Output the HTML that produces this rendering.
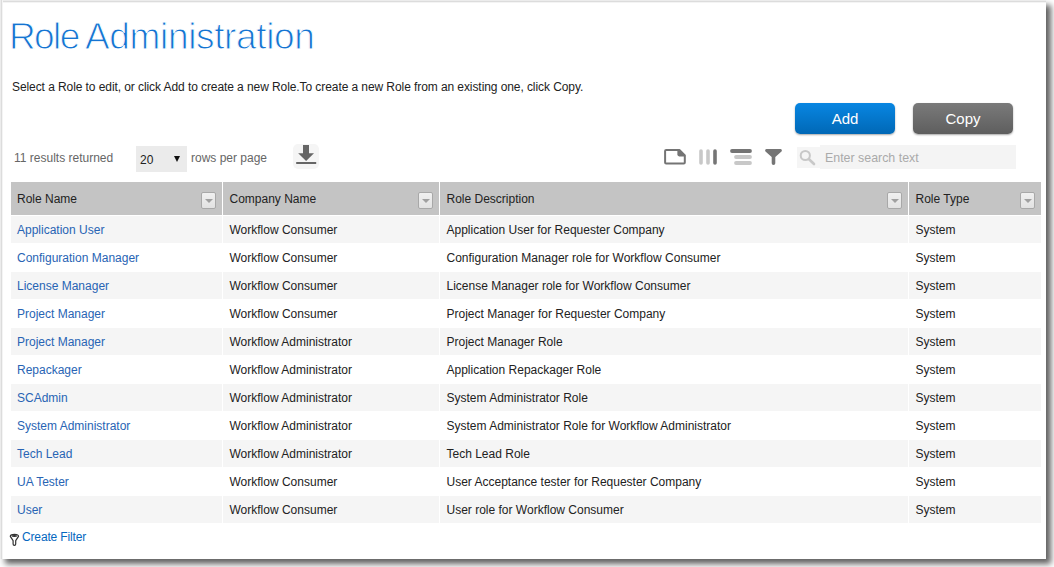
<!DOCTYPE html>
<html><head><meta charset="utf-8">
<style>
*{margin:0;padding:0;box-sizing:border-box;}
html,body{width:1054px;height:567px;overflow:hidden;background:#fff;font-family:"Liberation Sans",sans-serif;}
#frame{position:absolute;left:0;top:0;width:1046px;height:559px;background:#fff;
  box-shadow:5px 5px 6px rgba(0,0,0,.62);}
#topl{position:absolute;left:0;top:0;width:1046px;height:3px;background:linear-gradient(#ececec 0,#ececec 1px,#dcdcdc 1px,#dcdcdc 2px,#f4f4f4 2px);}
#leftl{position:absolute;left:0;top:0;width:3px;height:559px;background:linear-gradient(90deg,#ececec 0,#ececec 1px,#dcdcdc 1px,#dcdcdc 2px,#f4f4f4 2px);}
.abs{position:absolute;white-space:nowrap;}
#title,#title2{left:9px;top:16px;font-size:37px;line-height:41px;color:#1574d2;-webkit-text-stroke:1px #fff;}
#title2{left:85px;letter-spacing:-0.35px;}
#desc{left:12px;top:80px;font-size:12px;line-height:14px;color:#222;letter-spacing:-0.08px;}
.btn{position:absolute;top:103px;width:100px;height:31px;border-radius:5px;color:#fff;font-size:15px;line-height:31px;text-align:center;box-shadow:0 1px 2px rgba(0,0,0,.35);}
#add{left:795px;background:linear-gradient(#0886e2,#0068b6);}
#copy{left:913px;background:linear-gradient(#7a7a7a,#5e5e5e);}
#results{left:14px;top:151px;font-size:12px;line-height:14px;color:#666;}
#sel{position:absolute;left:136px;top:146px;width:51px;height:26px;background:#ebebeb;}
#sel span{position:absolute;left:4px;top:7px;font-size:12px;line-height:14px;color:#222;}
#sel i{position:absolute;left:38px;top:10px;width:0;height:0;border-left:3px solid transparent;border-right:3px solid transparent;border-top:6px solid #111;}
#rpp{left:191px;top:151px;font-size:12px;line-height:14px;color:#666;}
#dl{position:absolute;left:293px;top:144px;width:26px;height:25px;border-radius:5px;background:#f5f5f5;}
#search{position:absolute;left:797px;top:145px;width:219px;height:24px;background:linear-gradient(#fff 2px,#f5f5f5 2px,#f5f5f5 23px,#fff 23px);}
#search .ib{position:absolute;left:23px;top:0;width:196px;height:24px;background:#f4f4f4;}
#search span{position:absolute;left:28px;top:6px;font-size:12.4px;line-height:14px;color:#aaa;}
#tbl{position:absolute;left:11px;top:182px;width:1030px;border-collapse:collapse;table-layout:fixed;font-size:12px;}
#tbl th{height:33px;background:#c4c4c4;font-weight:normal;text-align:left;color:#222;padding:2px 0 0 6px;position:relative;border-right:1px solid #fff;line-height:14px;}
#tbl td{height:28px;border-top:1px solid #fff;border-right:1px solid #fff;padding:2px 0 0 6px;color:#222;line-height:14px;white-space:nowrap;}
#tbl th:last-child,#tbl td:last-child{border-right:none;}
#tbl th+th,#tbl td+td{padding-left:7px;}
#tbl tr.o td{background:#f5f5f5;}
#tbl td a{color:#2864b4;text-decoration:none;}
.fb{position:absolute;right:6px;top:10px;width:15px;height:17px;border:1px solid #a8a8a8;border-radius:2px;background:linear-gradient(#f0f0f0,#e2e2e2);}
.fb:after{content:"";position:absolute;left:3px;top:6px;border-left:4px solid transparent;border-right:4px solid transparent;border-top:4.5px solid #a0a0a0;}
#cf{left:22px;top:530px;font-size:12px;line-height:14px;color:#0568c0;letter-spacing:-0.15px;}
</style></head><body>
<div id="frame"></div>
<div id="topl"></div><div id="leftl"></div>
<div class="abs" id="title" style="letter-spacing:-1.6px">Role</div><div class="abs" id="title2">Administration</div>
<div class="abs" id="desc">Select a Role to edit, or click Add to create a new Role.To create a new Role from an existing one, click Copy.</div>
<div class="btn" id="add">Add</div>
<div class="btn" id="copy">Copy</div>
<div class="abs" id="results">11 results returned</div>
<div id="sel"><span>20</span><i></i></div>
<div class="abs" id="rpp">rows per page</div>
<div id="dl"><svg width="26" height="25" viewBox="0 0 26 25" style="position:absolute;left:0;top:0">
<rect x="10" y="1" width="6" height="9" fill="#666"/>
<polygon points="5.2,9.3 21,9.3 13.1,17" fill="#666"/>
<rect x="3.2" y="18" width="20" height="2" fill="#666"/>
</svg></div>
<svg class="abs" style="left:660px;top:144px" width="130" height="26" viewBox="660 144 130 26">
<path d="M665.1 152 v-1 a1 1 0 0 1 1-1 h13.2 l5.5 5.5 v7.1 a1 1 0 0 1 -1 1 h-17.7 a1 1 0 0 1 -1-1 z" fill="none" stroke="#747474" stroke-width="2" stroke-linejoin="round"/>
<path d="M677.4 149.5 H680 L685.2 154.7 V156.4 H679.2 a1.8 1.8 0 0 1 -1.8 -1.8z" fill="#747474"/>
<line x1="701" y1="151" x2="701" y2="163" stroke="#c8c8c8" stroke-width="3.6" stroke-linecap="round"/>
<line x1="708" y1="151" x2="708" y2="163" stroke="#c8c8c8" stroke-width="3.6" stroke-linecap="round"/>
<line x1="715" y1="151" x2="715" y2="163" stroke="#757575" stroke-width="3.6" stroke-linecap="round"/>
<line x1="732" y1="151" x2="750" y2="151" stroke="#757575" stroke-width="3.8" stroke-linecap="round"/>
<line x1="736" y1="157" x2="750" y2="157" stroke="#c8c8c8" stroke-width="3.8" stroke-linecap="round"/>
<line x1="736" y1="163" x2="750" y2="163" stroke="#c8c8c8" stroke-width="3.8" stroke-linecap="round"/>
<path d="M766.5 149 h14 a1.5 1.5 0 0 1 1 2.5 l-6.2 5.5 v6.2 a1.8 1.8 0 0 1 -3.6 0 v-6.2 l-6.2 -5.5 a1.5 1.5 0 0 1 1 -2.5z" fill="#757575"/>
</svg>
<div id="search"><div class="ib"></div>
<svg style="position:absolute;left:0;top:0" width="23" height="24" viewBox="0 0 23 24">
<circle cx="8.3" cy="10.5" r="4.6" fill="none" stroke="#c8c8c8" stroke-width="2"/>
<line x1="11.8" y1="14" x2="17" y2="19" stroke="#c8c8c8" stroke-width="2.6" stroke-linecap="round"/>
</svg>
<span>Enter search text</span></div>

<table id="tbl">
<colgroup><col style="width:211px"><col style="width:217px"><col style="width:469px"><col style="width:133px"></colgroup>
<tr><th>Role Name<div class="fb"></div></th><th>Company Name<div class="fb"></div></th><th>Role Description<div class="fb"></div></th><th>Role Type<div class="fb"></div></th></tr>
<tr class="o"><td><a>Application User</a></td><td>Workflow Consumer</td><td>Application User for Requester Company</td><td>System</td></tr>
<tr><td><a>Configuration Manager</a></td><td>Workflow Consumer</td><td>Configuration Manager role for Workflow Consumer</td><td>System</td></tr>
<tr class="o"><td><a>License Manager</a></td><td>Workflow Consumer</td><td>License Manager role for Workflow Consumer</td><td>System</td></tr>
<tr><td><a>Project Manager</a></td><td>Workflow Consumer</td><td>Project Manager for Requester Company</td><td>System</td></tr>
<tr class="o"><td><a>Project Manager</a></td><td>Workflow Administrator</td><td>Project Manager Role</td><td>System</td></tr>
<tr><td><a>Repackager</a></td><td>Workflow Administrator</td><td>Application Repackager Role</td><td>System</td></tr>
<tr class="o"><td><a>SCAdmin</a></td><td>Workflow Administrator</td><td>System Administrator Role</td><td>System</td></tr>
<tr><td><a>System Administrator</a></td><td>Workflow Administrator</td><td>System Administrator Role for Workflow Administrator</td><td>System</td></tr>
<tr class="o"><td><a>Tech Lead</a></td><td>Workflow Administrator</td><td>Tech Lead Role</td><td>System</td></tr>
<tr><td><a>UA Tester</a></td><td>Workflow Consumer</td><td>User Acceptance tester for Requester Company</td><td>System</td></tr>
<tr class="o"><td><a>User</a></td><td>Workflow Consumer</td><td>User role for Workflow Consumer</td><td>System</td></tr>
</table>

<svg class="abs" style="left:8px;top:532px" width="14" height="15" viewBox="0 0 14 15">
<path d="M2.3 4.3 a4.1 2 0 0 1 8.2 0 L7.7 8.6 V12 a1.3 1.3 0 0 1 -2.6 0 V8.6 Z" fill="none" stroke="#333" stroke-width="1.2" stroke-linejoin="round"/>
<ellipse cx="6.4" cy="4" rx="2.8" ry="1.1" fill="#333"/>
</svg>
<div class="abs" id="cf">Create Filter</div>
</body></html>
